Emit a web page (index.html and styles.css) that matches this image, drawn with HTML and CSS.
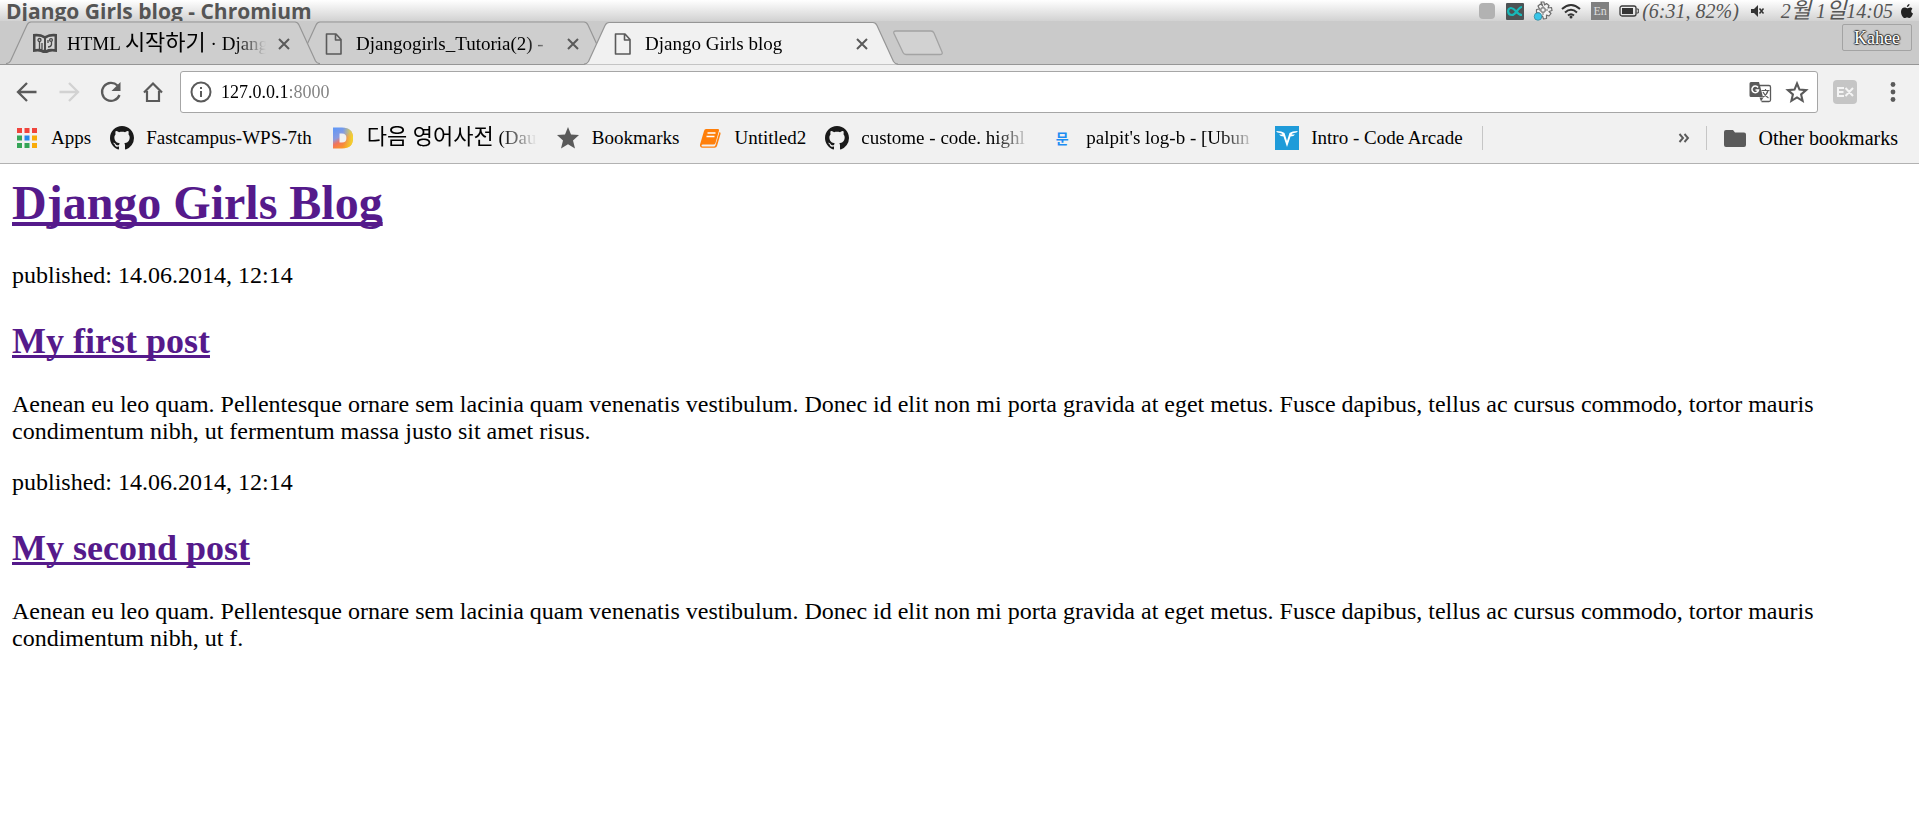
FILE: index.html
```html
<!DOCTYPE html>
<html lang="ko">
<head>
<meta charset="utf-8">
<title>Django Girls blog</title>
<link rel="stylesheet" href="styles.css">
</head>
<body>
<svg class="defs" aria-hidden="true">
  <symbol id="octocat" viewBox="0 0 16 16"><path fill="#1a1a1a" d="M8 0C3.58 0 0 3.58 0 8c0 3.54 2.29 6.53 5.47 7.59.4.07.55-.17.55-.38 0-.19-.01-.82-.01-1.49-2.01.37-2.53-.49-2.69-.94-.09-.23-.48-.94-.82-1.13-.28-.15-.68-.52-.01-.53.63-.01 1.08.58 1.23.82.72 1.21 1.87.87 2.33.66.07-.52.28-.87.51-1.07-1.78-.2-3.64-.89-3.64-3.95 0-.87.31-1.59.82-2.15-.08-.2-.36-1.02.08-2.12 0 0 .67-.21 2.2.82.64-.18 1.32-.27 2-.27s1.36.09 2 .27c1.53-1.04 2.2-.82 2.2-.82.44 1.1.16 1.92.08 2.12.51.56.82 1.27.82 2.15 0 3.07-1.87 3.75-3.65 3.95.29.25.54.73.54 1.48 0 1.07-.01 1.93-.01 2.2 0 .21.15.46.55.38A8.01 8.01 0 0 0 16 8c0-4.42-3.58-8-8-8z"/></symbol>
  <symbol id="page" viewBox="0 0 24 24"><path fill="none" stroke="#5a5a5a" stroke-width="1.600" stroke-linejoin="round" d="M4.500 2H14l5 5.500V22H4.500zM13.500 2v6H19"/></symbol>
  <symbol id="cross" viewBox="0 0 24 24"><path fill="none" stroke="#5a5a5a" stroke-width="2" d="M7 7l10 10M17 7L7 17"/></symbol>
  <symbol id="tab-shape" viewBox="0 0 314 43"><path class="tab-fill" d="M0 43Q3 43 4.500 40L21 4Q22.500 1 25 1H289Q291.500 1 293 4L309.500 40Q311 43 314 43z"/><path class="tab-line" fill="none" stroke="#969696" stroke-width="1.200" d="M0 42.500Q3 42.500 4.500 40L21 4Q22.500 1 25 1H289Q291.500 1 293 4L309.500 40Q311 42.500 314 42.500"/></symbol>
</svg>

<header class="panel">
  <div class="window-title">Django Girls blog - Chromium</div>
  <div class="indicators">
    <svg class="ind" viewBox="0 0 20 20"><rect x="2" y="2" width="16" height="16" rx="4" fill="#b2b2b2"/></svg>
    <svg class="ind" viewBox="0 0 20 20"><rect x="1" y="2" width="18" height="17" rx="1" fill="#4d5254"/><path d="M17 6c-4 0-6 8-10 8-5 0-5-7-1-7 5 0 5 7 11 7" fill="none" stroke="#18b9b9" stroke-width="2.200"/></svg>
    <svg class="ind" viewBox="0 0 20 20"><path fill="#f2f2f2" stroke="#6c6c6c" stroke-width="1.200" stroke-linejoin="round" d="M8 1l3 0 .5 3 2-1.500 2.500 2-1 2.500 3.500-.5.500 3-3 1 2 2-2 2.500-2.500-1 0 3.500-3 .5-1-3-2.500 1.500-2-2.500 1.500-2-3-.5 0-3 3-.5-1.500-3 2.500-2 2 1.500z"/><path fill="none" stroke="#6c6c6c" d="M8 7h4v4H8zM6 9h2M12 9h3M10 5v2M10 11v3"/><circle cx="5" cy="15.500" r="3.800" fill="#38c5e8" stroke="#317f94" stroke-width=".7"/></svg>
    <svg class="ind" viewBox="0 0 20 20"><g fill="none" stroke="#333" stroke-width="2"><path d="M1 8Q10 0 19 8"/><path d="M4 11.500Q10 6 16 11.500"/><path d="M7 14.500Q10 12 13 14.500"/></g><circle cx="10" cy="16" r="1.500" fill="#333"/></svg>
    <span class="input-method">En</span>
    <span class="battery">
      <svg class="battery-icon" viewBox="0 0 20 12"><rect x="1" y="1" width="16" height="10" rx="2" fill="none" stroke="#3a3a3a" stroke-width="1.300"/><rect x="3" y="3" width="11" height="6" fill="#333"/><path d="M17.500 4H19.300V8H17.500" fill="none" stroke="#3a3a3a"/></svg>
      <em>(6:31, 82%)</em>
    </span>
    <svg class="speaker" viewBox="0 0 14 14"><path d="M0 5h3l4-4v12l-4-4H0z" fill="#333"/><path d="M8.500 4.500l4 5M12.500 4.500l-4 5" stroke="#333" stroke-width="1.500"/></svg>
    <em class="clock">2<span class="hangul">월</span> 1<span class="hangul">일</span>14:05</em>
    <svg class="apple" viewBox="0 0 12 14"><path fill="#222" d="M8.500 0c.1 1.600-1.100 3-2.600 3C5.800 1.600 7 .2 8.500 0zM11.400 4.700C9.600 6 9.800 8.700 12 9.600 11.300 11.700 10 14 8.500 14c-1 0-1.300-.6-2.400-.6S4.700 14 3.800 14C1.900 14 0 10.500 0 7.700 0 5 1.700 3.500 3.500 3.500c1.100 0 2 .7 2.700.7.600 0 1.700-.8 3-.8.900 0 1.700.5 2.200 1.300z"/></svg>
  </div>
</header>

<nav class="tabstrip" aria-label="Tabs">
  <div class="tab tab-first">
    <svg class="tab-bg"><use href="#tab-shape"/></svg>
    <svg class="icon" viewBox="0 0 24 24"><path fill="#4a4a4a" d="M0 2Q7 1 12 4Q17 1 24 2V20Q17 18.500 14 21H10Q7 18.500 0 20z"/><path fill="#d6d6d6" d="M2.500 4.500Q8 4 11 6.500V18Q8 16 2.500 17zM13 6.500Q16 4 21.500 4.500V17Q16 16 13 18z"/><g fill="none" stroke="#4a4a4a" stroke-width="1.300"><circle cx="6.500" cy="8" r="1.500"/><path d="M6.500 9.500V17M9 11v6"/><circle cx="18" cy="8" r="1.400"/><path d="M18.500 9.500v3q-.5 2.500-3.500 2.500M15 8v3"/></g></svg>
    <a class="tab-label" href="#">HTML <span class="hangul">시작하기</span> · Djang</a>
    <button class="close" aria-label="Close tab"><svg class="icon"><use href="#cross"/></svg></button>
  </div>
  <div class="tab">
    <svg class="tab-bg"><use href="#tab-shape"/></svg>
    <svg class="icon"><use href="#page"/></svg>
    <a class="tab-label" href="#">Djangogirls_Tutoria(2) -</a>
    <button class="close" aria-label="Close tab"><svg class="icon"><use href="#cross"/></svg></button>
  </div>
  <div class="tab tab-active">
    <svg class="tab-bg"><use href="#tab-shape"/></svg>
    <svg class="icon"><use href="#page"/></svg>
    <a class="tab-label" href="#">Django Girls blog</a>
    <button class="close" aria-label="Close tab"><svg class="icon"><use href="#cross"/></svg></button>
  </div>
  <button class="new-tab" aria-label="New tab"><svg viewBox="0 0 50 26"><path fill="#d2d2d2" stroke="#a3a3a3" stroke-width="1.300" d="M3 1H38Q40 1 41 3L49 22Q50 24.500 47 24.500H13Q11 24.500 10 22.500L1 3.500Q0 1 3 1z"/></svg></button>
  <button class="profile">Kahee</button>
</nav>

<div class="toolbar">
  <button class="tool" aria-label="Back"><svg viewBox="0 0 28 28"><path fill="none" stroke="#5a5a5a" stroke-width="2.300" d="M24.500 14H7M15 5l-9 9 9 9"/></svg></button>
  <button class="tool" aria-label="Forward"><svg viewBox="0 0 28 28"><path fill="none" stroke="#d2d2d2" stroke-width="2.300" d="M5.500 14H23M15 5l9 9-9 9"/></svg></button>
  <button class="tool" aria-label="Reload"><svg viewBox="0 0 28 28"><path fill="none" stroke="#5a5a5a" stroke-width="2.300" d="M21.500 7.500A9 9 0 1 0 23.500 17"/><path fill="#5a5a5a" d="M24.500 4v9h-9z"/></svg></button>
  <button class="tool" aria-label="Home"><svg viewBox="0 0 28 28"><path fill="none" stroke="#5a5a5a" stroke-width="2.200" d="M6 14.500L15 5.500l9 9M9 13v10h12V13"/></svg></button>
  <div class="omnibox">
    <svg class="info" viewBox="0 0 24 24"><circle cx="12" cy="12" r="9.500" fill="none" stroke="#5a5a5a" stroke-width="2"/><path fill="#5a5a5a" d="M11 7h2v2h-2zM11 11h2v6h-2z"/></svg>
    <input class="url" type="text" value="127.0.0.1:8000" aria-label="Address">
    <button class="action" aria-label="Translate"><svg viewBox="0 0 24 24"><path fill="#fff" stroke="#5a5a5a" stroke-width="1.300" d="M11 5.500h10q1.500 0 1.500 1.500V20q0 1.500-1.500 1.500h-7.500"/><path fill="#5a5a5a" d="M3 2h8l4 15H3q-1.500 0-1.500-1.500V3.500Q1.500 2 3 2zM11.500 17.500h4l-2.500 4z"/><path fill="none" stroke="#fff" stroke-width="1.500" d="M10 7.500A3.300 3.300 0 1 0 10.500 10H7.500"/><path fill="none" stroke="#5a5a5a" stroke-width="1.200" d="M13.500 10.500h8M17.500 9v1.500M20 10.500q-1 4-5 6.500M15 12q2 4 5.500 6"/></svg></button>
    <button class="action" aria-label="Bookmark this page"><svg viewBox="0 0 24 24"><path fill="none" stroke="#5a5a5a" stroke-width="2.100" d="M12 3.500l2.500 6.100 6.600.5-5 4.300 1.500 6.400L12 17.400l-5.600 3.400 1.500-6.400-5-4.300 6.600-.5z"/></svg></button>
  </div>
  <button class="extension" aria-label="EX"><svg viewBox="0 0 24 24"><rect width="24" height="24" rx="4" fill="#c5c5c5"/><path fill="none" stroke="#f4f4f4" stroke-width="2" d="M11 8H5v8h6M5 12h5.500M12.500 8l7.500 8M20 8l-7.500 8"/></svg></button>
  <button class="menu" aria-label="Menu"><svg viewBox="0 0 24 24"><g fill="#5a5a5a"><circle cx="12" cy="4.500" r="2.400"/><circle cx="12" cy="12" r="2.400"/><circle cx="12" cy="19.500" r="2.400"/></g></svg></button>
</div>

<nav class="bookmarks" aria-label="Bookmarks">
  <a class="bookmark" href="#"><svg class="icon" viewBox="0 0 24 24"><path fill="#f0443c" d="M2 2h5v5H2zM9.500 2h5v5h-5zM17 2h5v5h-5z"/><path fill="#35a557" d="M2 9.500h5v5H2zM2 17h5v5H2zM9.500 17h5v5h-5z"/><path fill="#2389ea" d="M9.500 9.500h5v5h-5z"/><path fill="#f9ab09" d="M17 9.500h5v5h-5zM17 17h5v5h-5z"/></svg><span class="label">Apps</span></a>
  <a class="bookmark" href="#"><svg class="icon"><use href="#octocat"/></svg><span class="label">Fastcampus-WPS-7th</span></a>
  <a class="bookmark" href="#"><svg class="icon" viewBox="0 0 24 24"><defs><linearGradient id="dg" x1=".2" y1="0" x2=".7" y2="1"><stop offset="0" stop-color="#6398f5"/><stop offset=".4" stop-color="#8b9be0"/><stop offset=".6" stop-color="#f2745c"/><stop offset="1" stop-color="#ffa312"/></linearGradient><linearGradient id="dy"><stop offset=".5" stop-color="#e5d33c" stop-opacity="0"/><stop offset="1" stop-color="#f3db2b"/></linearGradient></defs><path fill="url(#dg)" fill-rule="evenodd" d="M2 1.500h9q11 0 11 10.500T11 22.500H2zM8.500 7.500v9H11q4.500 0 4.500-4.500T11 7.500z"/><path fill="url(#dy)" fill-rule="evenodd" d="M2 1.500h9q11 0 11 10.500T11 22.500H2zM8.500 7.500v9H11q4.500 0 4.500-4.500T11 7.500z"/></svg><span class="label label-long"><span class="hangul">다음 영어사전</span> (Dau</span></a>
  <a class="bookmark" href="#"><svg class="icon" viewBox="0 0 24 24"><path fill="#5a5a5a" d="M12 1l3 7.500 8 .6-6 5.400 2 8L12 18.200 5 22.500l2-8L1 9.100l8-.6z"/></svg><span class="label">Bookmarks</span></a>
  <a class="bookmark" href="#"><svg class="icon" viewBox="0 0 24 24"><path fill="#ff7f0a" d="M8 3h12q1.500 0 1 1.500L17.500 17q-.5 1.500-2 1.500H5q-1.500 0-1.500 1 0 1 1 1H16q1 0 1.500-1.500L21.500 6q1.500.5 1 2L19 20q-.5 1.800-2.500 1.800H4.500Q1.500 21.500 2 18.500L6 5q.5-2 2-2z"/><path stroke="#fff" stroke-width="1.300" d="M9.500 7h8M8.500 10.500h8"/></svg><span class="label">Untitled2</span></a>
  <a class="bookmark" href="#"><svg class="icon"><use href="#octocat"/></svg><span class="label label-long">custome - code. highl</span></a>
  <a class="bookmark" href="#"><span class="icon glyph">문</span><span class="label label-long">palpit's log-b - [Ubun</span></a>
  <a class="bookmark" href="#"><svg class="icon" viewBox="0 0 24 24"><path fill="#1f9bd9" d="M0 0h24v24H0z"/><path fill="#fff" d="M1 5q6 0 8.500 2L12 15l2.500-8Q17 5 23 5q-1 2-4 2-2 0-2.500 1.500H20q-1 2-4.500 2L12 21 8.500 10.500Q5.500 10.500 4 8.500h3.500Q7 7 5 7 2 7 1 5z"/></svg><span class="label">Intro - Code Arcade</span></a>
  <span class="divider"></span>
  <div class="bookmarks-end">
    <button class="overflow" aria-label="More bookmarks"><svg viewBox="0 0 12 12"><path fill="none" stroke="#5a5a5a" stroke-width="1.900" d="M1.500 2L5 6l-3.500 4M6.500 2L10 6l-3.500 4"/></svg></button>
    <span class="divider"></span>
    <a class="bookmark" href="#"><svg class="icon" viewBox="0 0 24 24"><path fill="#5a5a5a" d="M3 4h7l2 2.500h9q2 0 2 2V19q0 2-2 2H3q-2 0-2-2V6q0-2 2-2z"/></svg><span class="label label-folder">Other bookmarks</span></a>
  </div>
</nav>

<main class="page">
  <h1><a href="#">Django Girls Blog</a></h1>
  <article>
    <p>published: 14.06.2014, 12:14</p>
    <h2><a href="#">My first post</a></h2>
    <p>Aenean eu leo quam. Pellentesque ornare sem lacinia quam venenatis vestibulum. Donec id elit non mi porta gravida at eget metus. Fusce dapibus, tellus ac cursus commodo, tortor mauris condimentum nibh, ut fermentum massa justo sit amet risus.</p>
  </article>
  <article>
    <p>published: 14.06.2014, 12:14</p>
    <h2><a href="#">My second post</a></h2>
    <p>Aenean eu leo quam. Pellentesque ornare sem lacinia quam venenatis vestibulum. Donec id elit non mi porta gravida at eget metus. Fusce dapibus, tellus ac cursus commodo, tortor mauris condimentum nibh, ut f.</p>
  </article>
</main>
</body>
</html>
```

FILE: styles.css
```css
* { box-sizing: border-box; }

body {
  margin: 0;
  background: #fff;
  color: #000;
  font: 18px/24px "Liberation Serif", "Noto Sans CJK KR", serif;
}

button {
  display: flex;
  align-items: center;
  justify-content: center;
  flex: none;
  margin: 0;
  padding: 0;
  border: 0;
  background: none;
  font: inherit;
}

svg { display: block; flex: none; }
.defs { position: absolute; width: 0; height: 0; }
.icon { width: 24px; height: 24px; flex: none; }
.hangul { font-size: 22px; line-height: 20px; }

/* desktop panel */
.panel {
  display: flex;
  align-items: center;
  justify-content: space-between;
  height: 21px;
  padding: 0 6px;
  overflow: hidden;
  background: linear-gradient(#fff, #d2d2d2);
  color: #555;
}
.window-title { font: 700 21px/24px "Open Sans", sans-serif; white-space: nowrap; }
.indicators { display: flex; align-items: center; gap: 8px; font-size: 20px; white-space: nowrap; }
.ind { width: 20px; height: 20px; }
.input-method {
  width: 18px;
  height: 18px;
  margin: 0 2px;
  background: #808080;
  color: #ddd;
  font-size: 12px;
  line-height: 18px;
  text-align: center;
}
.battery { display: flex; align-items: center; gap: 3px; }
.battery-icon { width: 20px; height: 12px; }
.speaker { width: 14px; height: 14px; margin: 0 8px 0 4px; }
.apple { width: 12px; height: 14px; }

/* tabs */
.tabstrip {
  display: flex;
  align-items: stretch;
  height: 44px;
  padding-left: 6px;
  border-bottom: 1px solid #969696;
  background: #cacaca;
}
.tab {
  position: relative;
  display: flex;
  align-items: center;
  width: 314px;
  margin-right: -25px;
  padding: 2px 24px 0 27px;
}
.tab-first { z-index: 1; }
.tab-active { z-index: 2; margin-bottom: -1px; }
.tab-bg { position: absolute; left: 0; top: 0; width: 100%; height: 43px; fill: #cecece; }
.tab-active .tab-bg { height: 44px; fill: #f1f1f1; }
.tab .icon { position: relative; }
.tab-label {
  position: relative;
  flex: 1;
  margin: 0 6px 0 10px;
  overflow: hidden;
  color: #000;
  font-size: 19px;
  text-decoration: none;
  white-space: nowrap;
  mask-image: linear-gradient(90deg, #000 calc(100% - 30px), transparent);
}
.new-tab { position: relative; align-self: center; width: 50px; height: 26px; margin-left: 20px; }
.new-tab svg { width: 50px; height: 26px; }
.profile {
  width: 70px;
  height: 27px;
  margin: 3px 7px 0 auto;
  border: 1px solid #a3a3a3;
  border-radius: 2px;
  color: #fff;
  font-size: 18px;
  text-shadow: 1px 0 1px #333, -1px 0 1px #333, 0 1px 1px #333, 0 -1px 1px #333;
}

/* toolbar */
.toolbar {
  display: flex;
  align-items: center;
  padding: 6px 14px 5px 12px;
  background: #f1f1f1;
}
.tool { width: 28px; height: 28px; margin-right: 14px; }
.tool svg { width: 28px; height: 28px; }
.omnibox {
  display: flex;
  align-items: center;
  flex: 1;
  height: 42px;
  padding: 0 8px;
  border: 1px solid #a6a6a6;
  border-radius: 3px;
  background: #fff;
}
.info { width: 24px; height: 24px; }
.url {
  flex: 1;
  min-width: 0;
  margin: 0 8px;
  padding: 0;
  border: 0;
  outline: 0;
  background: linear-gradient(90deg, #000 67px, #808080 67px);
  background-clip: text;
  color: transparent;
  font: inherit;
}
.action { width: 24px; height: 24px; margin-left: 13px; }
.action svg { width: 24px; height: 24px; }
.extension { width: 24px; height: 24px; margin-left: 15px; }
.extension svg { width: 24px; height: 24px; }
.menu { width: 24px; height: 24px; margin-left: 24px; }
.menu svg { width: 24px; height: 24px; }

/* bookmarks bar */
.bookmarks {
  display: flex;
  align-items: center;
  gap: 19px;
  padding: 8px 21px 13px 15px;
  border-bottom: 1px solid #b2b2b2;
  background: #f1f1f1;
  font-size: 19px;
}
.bookmark { display: flex; align-items: center; gap: 12px; color: #000; text-decoration: none; white-space: nowrap; }
.label { height: 24px; }
.label-long {
  width: 170px;
  overflow: hidden;
  mask-image: linear-gradient(90deg, #000 calc(100% - 36px), transparent);
}
.label-folder { font-size: 20px; }
.glyph { color: #1e8df2; font: 700 14px/24px "Noto Sans CJK KR", sans-serif; text-align: center; }
.divider { width: 1px; height: 24px; background: #c6c6c6; }
.bookmarks-end { display: flex; align-items: center; gap: 16px; margin-left: auto; }
.overflow, .overflow svg { width: 12px; height: 12px; }

/* blog */
.page { padding: 11px 12px; font-size: 24px; line-height: 27px; }
.page h1 { margin: 0 0 32px; font-size: 48px; line-height: 55px; }
.page h2 { margin: 31px 0 29px; font-size: 36px; line-height: 42px; }
.page p { margin: 24px 0; }
.page a { color: #551a8b; text-decoration-skip-ink: none; }
```
